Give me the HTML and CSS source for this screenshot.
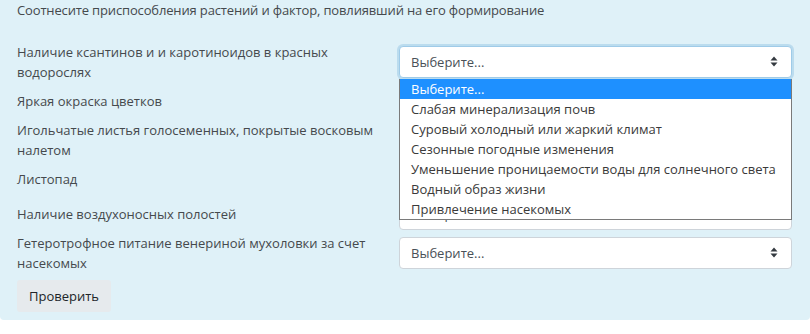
FILE: index.html
```html
<!DOCTYPE html>
<html lang="ru">

<head>
    <meta charset="UTF-8">
    <title>Соотнесите приспособления растений</title>
    <link rel="stylesheet" href="styles.css">
</head>

<body>
    <div class="que">
        <p class="qtext">Соотнесите приспособления растений и фактор, повлиявший на его формирование</p>

        <div class="answer">
            <div class="row double">
                <div class="label">Наличие ксантинов и и каротиноидов в красных водорослях</div>
                <div class="select-wrap">
                    <div class="select focused">
                        <span>Выберите...</span>
                        <svg class="arrows" width="8" height="11" viewBox="0 0 8 11"><path d="M4 0.5 L7.5 4.5 L0.5 4.5 Z M0.5 6.5 L7.5 6.5 L4 10.5 Z" fill="#343a40"/></svg>
                    </div>
                    <ul class="dropdown">
                        <li class="active">Выберите...</li>
                        <li>Слабая минерализация почв</li>
                        <li>Суровый холодный или жаркий климат</li>
                        <li>Сезонные погодные изменения</li>
                        <li>Уменьшение проницаемости воды для солнечного света</li>
                        <li>Водный образ жизни</li>
                        <li>Привлечение насекомых</li>
                    </ul>
                </div>
            </div>

            <div class="row">
                <div class="label">Яркая окраска цветков</div>
                <div class="select-wrap">
                    <div class="select"><span>Выберите...</span><svg class="arrows" width="8" height="11" viewBox="0 0 8 11"><path d="M4 0.5 L7.5 4.5 L0.5 4.5 Z M0.5 6.5 L7.5 6.5 L4 10.5 Z" fill="#343a40"/></svg></div>
                </div>
            </div>

            <div class="row double">
                <div class="label">Игольчатые листья голосеменных, покрытые восковым налетом</div>
                <div class="select-wrap">
                    <div class="select"><span>Выберите...</span><svg class="arrows" width="8" height="11" viewBox="0 0 8 11"><path d="M4 0.5 L7.5 4.5 L0.5 4.5 Z M0.5 6.5 L7.5 6.5 L4 10.5 Z" fill="#343a40"/></svg></div>
                </div>
            </div>

            <div class="row">
                <div class="label">Листопад</div>
                <div class="select-wrap">
                    <div class="select"><span>Выберите...</span><svg class="arrows" width="8" height="11" viewBox="0 0 8 11"><path d="M4 0.5 L7.5 4.5 L0.5 4.5 Z M0.5 6.5 L7.5 6.5 L4 10.5 Z" fill="#343a40"/></svg></div>
                </div>
            </div>

            <div class="row">
                <div class="label">Наличие воздухоносных полостей</div>
                <div class="select-wrap">
                    <div class="select"><span>Выберите...</span><svg class="arrows" width="8" height="11" viewBox="0 0 8 11"><path d="M4 0.5 L7.5 4.5 L0.5 4.5 Z M0.5 6.5 L7.5 6.5 L4 10.5 Z" fill="#343a40"/></svg></div>
                </div>
            </div>

            <div class="row double">
                <div class="label">Гетеротрофное питание венериной мухоловки за счет насекомых</div>
                <div class="select-wrap">
                    <div class="select"><span>Выберите...</span><svg class="arrows" width="8" height="11" viewBox="0 0 8 11"><path d="M4 0.5 L7.5 4.5 L0.5 4.5 Z M0.5 6.5 L7.5 6.5 L4 10.5 Z" fill="#343a40"/></svg></div>
                </div>
            </div>
        </div>

        <button class="check-btn">Проверить</button>
    </div>
</body>

</html>
```

FILE: styles.css
```css
body {
    margin: 0;
    background-color: #fff;
    font-family: "Open Sans", "Noto Sans", sans-serif;
    font-size: 13px;
    line-height: 20px;
    color: #45494d;
}

.que {
    background-color: #dff1f8;
    padding: 0 18px 8px 17px;
    border-radius: 0 0 4px 4px;
}

.qtext {
    margin: 0 0 20px 0;
    letter-spacing: -0.15px;
}

.answer {
    display: flex;
    flex-direction: column;
}

.row {
    display: flex;
    align-items: center;
    justify-content: space-between;
    height: 35px;
}

.row.double {
    height: 43px;
}

.label {
    width: 370px;
}

.select-wrap {
    position: relative;
    width: 393px;
}

.select {
    box-sizing: border-box;
    height: 32px;
    display: flex;
    align-items: center;
    justify-content: space-between;
    padding: 0 13px 0 11px;
    background-color: #fff;
    border: 1px solid #ced4da;
    border-radius: 4px;
    color: #495057;
}

.select.focused {
    border-color: #9fcbe8;
    box-shadow: 0 0 0 2px rgba(120, 180, 220, 0.35);
}

.dropdown {
    position: absolute;
    top: 33px;
    left: 0;
    right: 0;
    z-index: 10;
    margin: 0;
    padding: 0;
    list-style: none;
    background-color: #fff;
    border: 1px solid #7a7a7a;
    border-top: none;
    color: #3a3a3a;
}

.dropdown li {
    height: 20px;
    line-height: 20px;
    padding-left: 11px;
}

.dropdown li.active {
    background-color: #1e90ff;
    color: #fff;
}

.check-btn {
    margin-top: 6px;
    height: 32px;
    padding: 0 12px;
    font-family: inherit;
    font-size: 13px;
    color: #212529;
    background-color: #e6eaed;
    border: none;
    border-radius: 3px;
}
```
